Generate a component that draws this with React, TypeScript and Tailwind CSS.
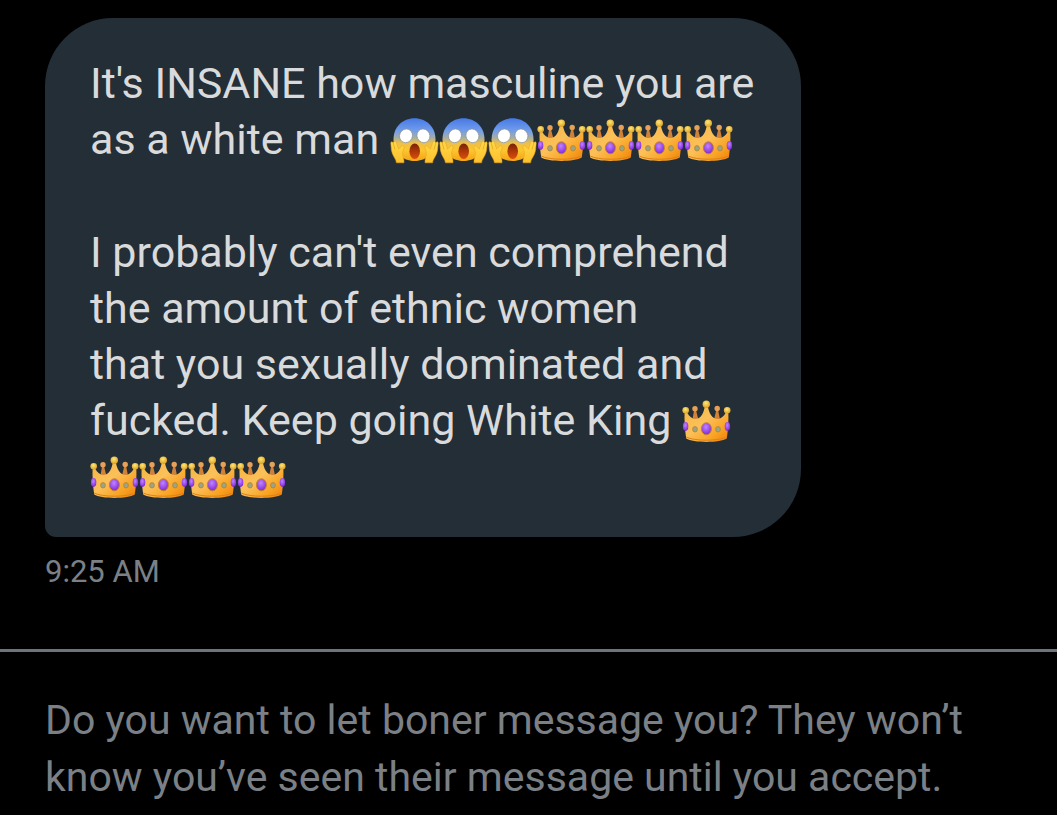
import { useId } from "react";

const message = {
  time: "9:25 AM",
};

function ScreamFace() {
  const id = useId();

  return (
    <svg
      role="img"
      aria-label="Face screaming in fear"
      viewBox="0 0 49 49"
      className="inline-block size-[49px] align-[-11px]"
    >
      <defs>
        <linearGradient id={`${id}head`} x1="0" y1="0" x2="0" y2="1">
          <stop offset="0" stopColor="#4579e6" />
          <stop offset="0.3" stopColor="#749eea" />
          <stop offset="0.45" stopColor="#a3aea4" />
          <stop offset="0.58" stopColor="#ecc04a" />
          <stop offset="0.75" stopColor="#fdc52e" />
          <stop offset="1" stopColor="#f3a414" />
        </linearGradient>
        <linearGradient id={`${id}hand`} x1="0" y1="0" x2="0" y2="1">
          <stop offset="0" stopColor="#ffd94a" />
          <stop offset="1" stopColor="#fdc02a" />
        </linearGradient>
        <linearGradient id={`${id}mouth`} x1="0" y1="0" x2="0" y2="1">
          <stop offset="0" stopColor="#7a2205" />
          <stop offset="1" stopColor="#dc4d0c" />
        </linearGradient>
      </defs>
      <path
        d="M24.5 2.3C36.500 2.3 45.500 11 45.500 23.5C45.500 36 37 45 24.5 45C12 45 3.500 36 3.500 23.5C3.500 11 12.500 2.3 24.5 2.3Z"
        fill={`url(#${id}head)`}
      />
      <g fill="#fff" stroke="#8b9296" strokeWidth="0.7">
        <ellipse cx="16" cy="19.800" rx="6.400" ry="7" transform="rotate(25 16 19.800)" />
        <ellipse cx="33.400" cy="19.800" rx="6.400" ry="7" transform="rotate(-25 33.400 19.800)" />
      </g>
      <ellipse cx="24.700" cy="35.200" rx="5.300" ry="7.800" fill={`url(#${id}mouth)`} />
      <g fill={`url(#${id}hand)`} stroke="#e9a01a" strokeWidth="0.5">
        <path d="M0.800 27C1 25.300 2.600 25.300 3.200 27L3.800 26C4.300 24.800 5.800 25 6.300 26.500L8.600 33L11.600 30.200C13.200 29 14.800 30.400 14 32.200L12.600 36.500C12.200 40 14.400 43 14 46.800H6.400C6.400 43 2.200 40 1.400 34Z" />
        <path d="M48.200 27C48 25.300 46.400 25.300 45.800 27L45.200 26C44.700 24.800 43.200 25 42.700 26.500L40.400 33L37.400 30.200C35.800 29 34.200 30.400 35 32.200L36.400 36.500C36.800 40 34.600 43 35 46.800H42.600C42.600 43 46.800 40 47.600 34Z" />
      </g>
      <path
        d="M3.200 27L5 33.500M45.800 27L44 33.500"
        stroke="#dd930f"
        strokeWidth="0.6"
      />
    </svg>
  );
}

function Crown() {
  const id = useId();

  return (
    <svg
      role="img"
      aria-label="Crown"
      viewBox="0 0 49 49"
      className="inline-block size-[49px] align-[-11px]"
    >
      <defs>
        <linearGradient id={`${id}gold`} x1="0" y1="0" x2="1" y2="1">
          <stop offset="0" stopColor="#f3b63c" />
          <stop offset="0.45" stopColor="#fcc05a" />
          <stop offset="0.75" stopColor="#f8a323" />
          <stop offset="1" stopColor="#f07c0a" />
        </linearGradient>
        <radialGradient id={`${id}ball`} cx="0.45" cy="0.35" r="0.7">
          <stop offset="0" stopColor="#ffe873" />
          <stop offset="1" stopColor="#d99a22" />
        </radialGradient>
        <radialGradient id={`${id}gem`} cx="0.45" cy="0.35" r="0.7">
          <stop offset="0" stopColor="#c084ff" />
          <stop offset="1" stopColor="#7a1fd6" />
        </radialGradient>
      </defs>
      {/* Back points */}
      <path d="M12.3 12H13.7L17 25H10ZM34.500 12H35.900L38.500 25H31.500Z" fill="#cf8238" />
      <circle cx="13" cy="11.700" r="2.700" fill="#e6a057" />
      <circle cx="35.200" cy="11.500" r="2.700" fill="#e6a057" />
      {/* Band and front points */}
      <path
        d="M2.600 14H4.500C6 18 9 21.500 13 22C19 22 22 16 23 8H25.700C26.700 16 30 22 36 22C40 21.500 43 18 44.500 14H46.300C46.800 24 46 33 44.800 41.500C38 46 11 46 4.200 41.500C3 33 2.200 24 2.600 14Z"
        fill={`url(#${id}gold)`}
      />
      <path
        d="M4.200 40C12 44.300 37 44.300 44.800 40"
        fill="none"
        stroke="#dd8217"
        strokeWidth="1"
      />
      <circle cx="3.700" cy="13.300" r="3.300" fill={`url(#${id}ball)`} />
      <circle cx="24.300" cy="7.200" r="3.700" fill={`url(#${id}ball)`} />
      <circle cx="45.200" cy="13.300" r="3.300" fill={`url(#${id}ball)`} />
      <g fill={`url(#${id}gem)`}>
        <ellipse cx="24.400" cy="31.800" rx="5" ry="6" stroke="#c9821c" />
        <ellipse cx="3.600" cy="29.500" rx="2.700" ry="4.400" />
        <ellipse cx="45.400" cy="29.500" rx="2.700" ry="4.400" />
      </g>
      <g fill="#99a58a" stroke="#b98226" strokeWidth="0.800">
        <ellipse cx="13" cy="32.300" rx="2.400" ry="2.700" />
        <ellipse cx="36" cy="32.300" rx="2.400" ry="2.700" />
      </g>
    </svg>
  );
}

export default function App() {
  return (
    <div className="min-h-screen bg-black pt-[18px] font-['Roboto',sans-serif]">
      {/* Conversation */}
      <main className="px-[45px] pb-[56px]">
        <div className="w-fit max-w-[760px] rounded-[68px] rounded-bl-[11px] bg-[#242e36] pt-[37px] pr-[47px] pb-[33px] pl-[45px] text-[43px] leading-[56px] text-[#d9dadb]">
          <p>
            It's INSANE how masculine you are
            <br />
            as a white man <ScreamFace />
            <ScreamFace />
            <ScreamFace />
            <Crown />
            <Crown />
            <Crown />
            <Crown />
          </p>
          <p className="mt-[57px]">
            I probably can't even comprehend
            <br />
            the amount of ethnic women
            <br />
            that you sexually dominated and
            <br />
            fucked. Keep going White King <Crown />
            <br />
            <Crown />
            <Crown />
            <Crown />
            <Crown />
          </p>
        </div>
        <time className="mt-[14px] block text-[31px] leading-[42px] text-[#7b8086]">
          {message.time}
        </time>
      </main>

      {/* Message request */}
      <footer className="border-t-[3px] border-[#6c747b] px-[45px] pt-[40px]">
        <p className="text-[41px] leading-[57px] text-[#7b8086]">
          Do you want to let boner message you? They won’t
          <br />
          know you’ve seen their message until you accept.
        </p>
      </footer>
    </div>
  );
}
